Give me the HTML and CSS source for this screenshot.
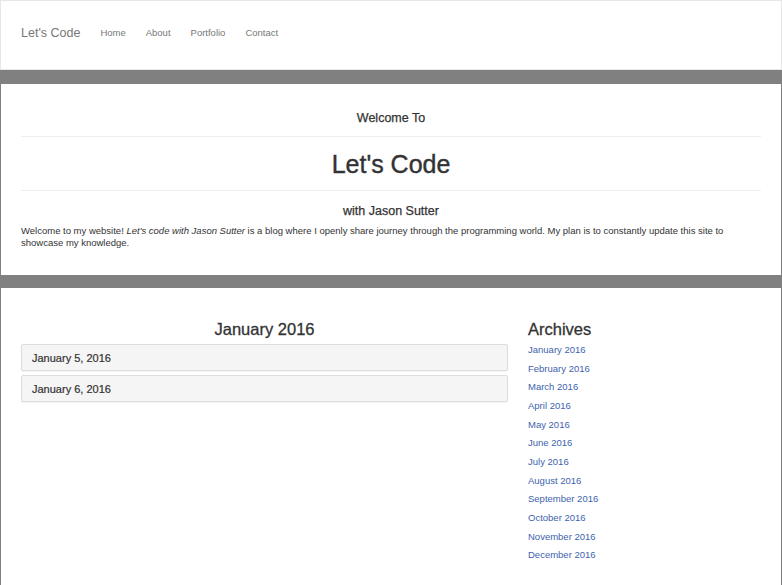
FILE: index.html
```html
<!DOCTYPE html>
<html>
<head>
<meta charset="utf-8">
<title>Let's Code</title>
<link rel="stylesheet" href="styles.css">
</head>
<body>
<nav class="navbar">
  <a class="brand" href="#">Let's Code</a>
  <ul class="nav-links">
    <li><a href="#">Home</a></li>
    <li><a href="#">About</a></li>
    <li><a href="#">Portfolio</a></li>
    <li><a href="#">Contact</a></li>
  </ul>
</nav>

<section class="section intro">
  <h4 class="welcome">Welcome To</h4>
  <hr class="rule rule-top">
  <h1 class="title">Let's Code</h1>
  <hr class="rule">
  <h4 class="subtitle">with Jason Sutter</h4>
  <p class="lead-text">Welcome to my website! <em>Let's code with Jason Sutter</em> is a blog where I openly share journey through the programming world. My plan is to constantly update this site to showcase my knowledge.</p>
</section>

<section class="section posts">
  <div class="main-col">
    <h3 class="month-title">January 2016</h3>
    <div class="panel"><span class="panel-title">January 5, 2016</span></div>
    <div class="panel"><span class="panel-title">January 6, 2016</span></div>
  </div>
  <aside class="side-col">
    <h3 class="archives-title">Archives</h3>
    <ul class="archive-list">
      <li><a href="#">January 2016</a></li>
      <li><a href="#">February 2016</a></li>
      <li><a href="#">March 2016</a></li>
      <li><a href="#">April 2016</a></li>
      <li><a href="#">May 2016</a></li>
      <li><a href="#">June 2016</a></li>
      <li><a href="#">July 2016</a></li>
      <li><a href="#">August 2016</a></li>
      <li><a href="#">September 2016</a></li>
      <li><a href="#">October 2016</a></li>
      <li><a href="#">November 2016</a></li>
      <li><a href="#">December 2016</a></li>
    </ul>
  </aside>
</section>
</body>
</html>
```

FILE: styles.css
```css
* { box-sizing: border-box; }

html, body {
  margin: 0;
  padding: 0;
}

body {
  background: #808080;
  font-family: "Liberation Sans", Arial, sans-serif;
  font-size: 9.5px;
  line-height: 12px;
  color: #333;
}

a { text-decoration: none; }

.navbar {
  display: flex;
  align-items: center;
  height: 70px;
  background: #fff;
  border: 1px solid #e7e7e7;
  padding: 0 20px 4px;
}

.brand {
  font-size: 12.5px;
  color: #777;
  margin-right: 10px;
  padding-bottom: 1px;
}

.nav-links {
  display: flex;
  list-style: none;
  margin: 0;
  padding: 0;
}

.nav-links a {
  display: block;
  padding: 0 10px;
  color: #777;
  font-size: 9.5px;
}

.section {
  background: #fff;
  margin: 14px 1px 0;
  padding: 0 20px;
}

.intro {
  height: 191px;
  padding-top: 28px;
}

.welcome, .subtitle {
  margin: 0;
  text-align: center;
  font-size: 12.5px;
  font-weight: 500;
  line-height: 1.1;
  -webkit-text-stroke: 0.25px #333;
}

.rule {
  border: 0;
  border-top: 1px solid #eee;
  margin: 0;
}

.rule-top {
  margin-top: 10px;
}

.title {
  margin: 14px 0 12px;
  text-align: center;
  font-size: 25px;
  font-weight: 500;
  line-height: 1.1;
  -webkit-text-stroke: 0.4px #333;
}

.subtitle {
  margin-top: 14px;
}

.lead-text {
  margin: 6px 0 0;
}

.posts {
  margin-top: 13px;
  display: grid;
  grid-template-columns: 487px 1fr;
  column-gap: 20px;
  padding-top: 32px;
  padding-bottom: 40px;
}

.month-title, .archives-title {
  margin: 0;
  font-size: 16.5px;
  font-weight: 500;
  line-height: 1.1;
  -webkit-text-stroke: 0.3px #333;
}

.month-title {
  text-align: center;
  margin-bottom: 6px;
}

.panel {
  display: flex;
  align-items: center;
  height: 27px;
  background: #f5f5f5;
  border: 1px solid #ddd;
  border-radius: 2px;
  padding: 0 10px;
  margin-bottom: 4px;
  box-shadow: 0 1px 1px rgba(0,0,0,0.05);
}

.panel-title {
  font-size: 11px;
  font-weight: 500;
  color: #333;
  -webkit-text-stroke: 0.2px #333;
}

.archive-list {
  list-style: none;
  margin: 3px 0 0;
  padding: 0;
}

.archive-list li {
  line-height: 18.64px;
}

.archive-list a {
  color: #3d63ae;
  font-size: 9.5px;
}
```
